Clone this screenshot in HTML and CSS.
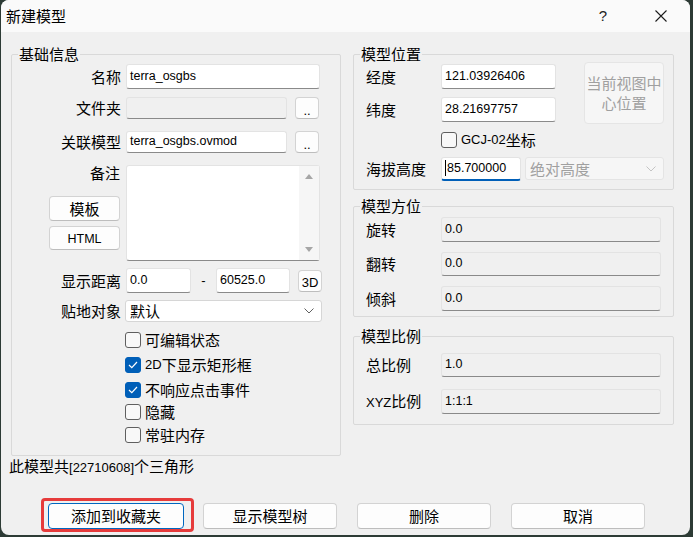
FILE: index.html
```html
<!DOCTYPE html>
<html lang="zh-CN">
  <head>
    <meta charset="utf-8">
    <title>新建模型</title>
    <link rel="stylesheet" href="styles.css">
  </head>
  <body>
    <div class="window">
      <div class="titlebar">
        <span class="title">新建模型</span>
        <span class="help">?</span>
        <span class="close">
          <svg width="12" height="12" viewBox="0 0 12 12"><path d="M0.5 0.5L11.5 11.5M11.5 0.5L0.5 11.5" stroke="#1c1c1c" stroke-width="1.1" fill="none"/></svg>
        </span>
      </div>

      <div class="content">
        <div class="columns">
          <!-- left: basic info -->
          <div class="group basic">
            <div class="group-title">基础信息</div>
            <div class="row r-name">
              <span class="lbl">名称</span>
              <div class="edit w-full">terra_osgbs</div>
            </div>
            <div class="row r-folder">
              <span class="lbl">文件夹</span>
              <div class="edit disabled w-short"></div>
              <button class="btn small dots">..</button>
            </div>
            <div class="row r-link">
              <span class="lbl">关联模型</span>
              <div class="edit w-short">terra_osgbs.ovmod</div>
              <button class="btn small dots">..</button>
            </div>
            <div class="row r-note">
              <div class="note-side">
                <span class="note-lbl">备注</span>
                <button class="btn side-btn tpl">模板</button>
                <button class="btn side-btn html"><span class="latin">HTML</span></button>
              </div>
              <div class="memo">
                <div class="vscroll">
                  <span class="arrow up"></span>
                  <span class="arrow down"></span>
                </div>
              </div>
            </div>
            <div class="row r-dist">
              <span class="lbl">显示距离</span>
              <div class="edit w-near">0.0</div>
              <span class="dash">-</span>
              <div class="edit w-far">60525.0</div>
              <button class="btn small btn-3d"><span class="latin">3D</span></button>
            </div>
            <div class="row r-ground">
              <span class="lbl">贴地对象</span>
              <div class="combo w-ground">
                <span>默认</span>
                <svg class="chev" width="10" height="6" viewBox="0 0 10 6"><path d="M0.5 0.5L5 5L9.5 0.5" stroke="#606060" fill="none"/></svg>
              </div>
            </div>
            <div class="checks">
              <div class="check"><span class="box"></span>可编辑状态</div>
              <div class="check"><span class="box on"><svg width="10" height="8" viewBox="0 0 10 8"><path d="M1 4L3.8 6.6L9 1" stroke="#fff" stroke-width="1.2" fill="none"/></svg></span><span class="latin">2D</span>下显示矩形框</div>
              <div class="check"><span class="box on"><svg width="10" height="8" viewBox="0 0 10 8"><path d="M1 4L3.8 6.6L9 1" stroke="#fff" stroke-width="1.2" fill="none"/></svg></span>不响应点击事件</div>
              <div class="check c4"><span class="box"></span>隐藏</div>
              <div class="check c5"><span class="box"></span>常驻内存</div>
            </div>
          </div>

          <!-- right column -->
          <div class="right-col">
            <div class="group pos">
              <div class="group-title">模型位置</div>
              <div class="pos-grid">
                <span class="rlbl">经度</span>
                <div class="edit">121.03926406</div>
                <button class="btn center-btn" disabled>当前视图中心位置</button>
                <span class="rlbl">纬度</span>
                <div class="edit">28.21697757</div>
              </div>
              <div class="gcj">
                <div class="check"><span class="box"></span><span class="latin">GCJ-02</span>坐标</div>
              </div>
              <div class="frow alt">
                <span class="rlbl">海拔高度</span>
                <div class="edit focus"><span class="caret"></span>85.700000</div>
                <div class="combo off">
                  <span>绝对高度</span>
                  <svg class="chev" width="10" height="6" viewBox="0 0 10 6"><path d="M0.5 0.5L5 5L9.5 0.5" stroke="#c4c4c4" fill="none"/></svg>
                </div>
              </div>
            </div>

            <div class="group orient">
              <div class="group-title">模型方位</div>
              <div class="frow f1"><span class="rlbl">旋转</span><div class="edit ro">0.0</div></div>
              <div class="frow f2"><span class="rlbl">翻转</span><div class="edit ro">0.0</div></div>
              <div class="frow f3"><span class="rlbl">倾斜</span><div class="edit ro">0.0</div></div>
            </div>

            <div class="group scale">
              <div class="group-title">模型比例</div>
              <div class="frow s1"><span class="rlbl">总比例</span><div class="edit ro">1.0</div></div>
              <div class="frow s2"><span class="rlbl"><span class="latin">XYZ</span>比例</span><div class="edit ro">1:1:1</div></div>
            </div>
          </div>
        </div>

        <div class="summary">此模型共<span class="latin">[22710608]</span>个三角形</div>

        <div class="buttons">
          <span class="highlight"><button class="btn wide default">添加到收藏夹</button></span>
          <button class="btn wide tree">显示模型树</button>
          <button class="btn wide gap">删除</button>
          <button class="btn wide gap">取消</button>
        </div>
      </div>
    </div>
  </body>
</html>
```

FILE: styles.css
```css
* { box-sizing: border-box; }
html, body { margin: 0; }
body {
  width: 693px;
  height: 537px;
  overflow: hidden;
  background: #2d3b35;
  font-family: "Noto Sans CJK SC", sans-serif;
  font-size: 15px;
  line-height: 20px;
  color: #000;
}
.latin {
  font-family: "Liberation Sans", Arial, sans-serif;
  font-size: 13px;
}

.window {
  width: 689px;
  height: 535px;
  margin-left: 1px;
  background: #f0f0f0;
  border-radius: 8px;
  overflow: hidden;
}

/* title bar */
.titlebar {
  height: 32px;
  background: #fafafa;
  display: flex;
  align-items: center;
  padding-left: 5px;
}
.title { flex: 1; }
.help {
  width: 46px;
  text-align: center;
  font-family: "Liberation Sans", sans-serif;
  font-size: 15px;
  color: #222;
}
.close {
  width: 46px;
  margin-left: 12px;
  margin-right: 6px;
  display: flex;
  justify-content: center;
}

.content { padding: 0 16px 0 10px; }
.columns {
  display: flex;
  align-items: flex-start;
  gap: 12px;
  margin-top: 22px;
}

/* group boxes */
.group {
  border: 1px solid #d9d9d9;
  border-radius: 2px;
}
.group-title {
  width: fit-content;
  margin: -9px 0 0 6px;
  padding: 0 1px;
  line-height: 16px;
  background: #f0f0f0;
}
.basic { width: 330px; padding-bottom: 9px; }
.right-col { width: 321px; display: flex; flex-direction: column; }

/* edits */
.edit {
  height: 100%;
  display: flex;
  align-items: center;
  padding: 0 3px 2px;
  background: #fff;
  border: 1px solid #e3e3e3;
  border-bottom-color: #8a8a8a;
  border-radius: 3px;
  font-family: "Liberation Sans", Arial, sans-serif;
  font-size: 12.5px;
  white-space: nowrap;
}
.edit.disabled, .edit.ro { background: #f0f0f0; }
.edit.focus { border-bottom: 2px solid #005fb8; padding-bottom: 1px; }
.caret {
  width: 1px;
  height: 16px;
  margin-right: 1px;
  background: #000;
}

.btn {
  font-family: "Noto Sans CJK SC", sans-serif;
  font-size: 15px;
  line-height: 20px;
  color: #000;
  padding: 0;
  background: #fdfdfd;
  border: 1px solid #d3d3d3;
  border-bottom-color: #bdbdbd;
  border-radius: 4px;
}
.btn.small { width: 24px; height: 22px; margin-left: 8px; }
.btn.dots { font-family: "Liberation Sans", sans-serif; font-size: 13px; padding-top: 3px; }

/* left rows */
.row { display: flex; align-items: center; }
.lbl {
  width: 109px;
  margin-right: 5px;
  text-align: right;
  flex: none;
}
.r-name { margin-top: 2px; height: 25px; }
.r-folder { margin-top: 8px; height: 22px; }
.r-link { margin-top: 12px; height: 22px; }
.r-note { margin-top: 12px; height: 96px; align-items: flex-start; }
.r-dist { margin-top: 7px; height: 25px; }
.r-ground { margin-top: 7px; height: 22px; }
.w-full { width: 194px; }
.w-short { width: 161px; }
.w-near { width: 65px; }
.w-far { width: 74px; }

.note-side {
  width: 109px;
  margin-right: 5px;
  display: flex;
  flex-direction: column;
  align-items: flex-end;
}
.note-lbl { line-height: 16px; margin-right: 1px; }
.side-btn { width: 71px; margin-right: 1px; }
.side-btn.tpl { height: 25px; margin-top: 15px; }
.side-btn.html { height: 24px; margin-top: 5px; }
.side-btn.html .latin { font-size: 12.5px; }
.memo {
  width: 194px;
  height: 96px;
  background: #fff;
  border: 1px solid #e3e3e3;
  border-bottom-color: #8a8a8a;
  border-radius: 3px;
  display: flex;
  justify-content: flex-end;
}
.vscroll {
  width: 20px;
  background: #f6f6f6;
  display: flex;
  flex-direction: column;
  justify-content: space-between;
  align-items: center;
  padding: 8px 0 8px;
}
.arrow { width: 0; height: 0; border-left: 4px solid transparent; border-right: 4px solid transparent; }
.arrow.up { border-bottom: 5px solid #a6a6a6; }
.arrow.down { border-top: 5px solid #a6a6a6; }

.dash { width: 25px; text-align: center; font-family: "Liberation Sans", sans-serif; font-size: 13px; }
.btn-3d { height: 23px; margin-left: 7px; }

.combo {
  height: 100%;
  display: flex;
  align-items: center;
  justify-content: space-between;
  padding: 0 7px 0 4px;
  background: #fff;
  border: 1px solid #d6d6d6;
  border-radius: 3px;
}
.w-ground { width: 197px; margin-left: -1px; }
.combo.off { background: #f6f6f6; border-color: #e4e4e4; color: #a0a0a0; width: 139px; height: 23px; margin-left: 4px; align-self: flex-start; }

/* checkboxes */
.checks { margin-top: 7px; padding-left: 113px; }
.check { height: 22px; margin-top: 3px; display: flex; align-items: center; }
.check:first-child { margin-top: 0; }
.check.c4 { margin-top: 0; }
.check.c5 { margin-top: 1px; }
.box {
  width: 16px;
  height: 16px;
  margin-right: 4px;
  border: 1px solid #5f5f5f;
  border-radius: 3px;
  background: #f8f8f8;
  display: flex;
  align-items: center;
  justify-content: center;
  flex: none;
}
.box.on { background: #005fb8; border-color: #005fb8; }

/* right groups */
.rlbl { width: 75px; flex: none; }
.pos { padding-bottom: 8px; }
.pos-grid {
  display: grid;
  grid-template-columns: 75px 115px 28px 80px;
  grid-template-rows: 25px 25px;
  row-gap: 8px;
  align-items: center;
  margin-top: 2px;
  padding-left: 12px;
}
.pos-grid .rlbl { grid-column: 1; }
.pos-grid .edit { grid-column: 2; height: 25px; }
.center-btn {
  grid-column: 4;
  grid-row: 1 / 3;
  align-self: stretch;
  margin: -2px 0;
  background: #f6f6f6;
  border-color: #e5e5e5;
  color: #a0a0a0;
  padding: 0 1px;
}
.gcj { margin-top: 7px; padding-left: 87px; }
.gcj .check { height: 22px; }
.frow { display: flex; align-items: center; padding-left: 12px; }
.alt { margin-top: 6px; height: 24px; }
.alt .edit { width: 80px; }
.orient { margin-top: 16px; padding-bottom: 5px; }
.orient .edit, .scale .edit { width: 220px; }
.f1 { margin-top: 3px; height: 25px; }
.f2 { margin-top: 10px; height: 24px; }
.f3 { margin-top: 10px; height: 25px; }
.scale { margin-top: 19px; padding-bottom: 10px; }
.s1 { margin-top: 9px; height: 24px; }
.s2 { margin-top: 12px; height: 25px; }

/* bottom */
.summary { margin-left: -2px; line-height: 20px; }
.buttons {
  display: flex;
  align-items: flex-start;
  margin-top: 20px;
}
.highlight {
  margin-left: 30px;
  padding: 2px 7px 0 4px;
  border: 3px solid #e63b3b;
  border-radius: 4px;
  display: flex;
}
.btn.wide { width: 134px; height: 26px; }
.btn.default { width: 136px; border: 1px solid #0067c0; }
.tree { margin: 5px 0 0 9px; }
.gap { margin: 5px 0 0 20px; }
```
